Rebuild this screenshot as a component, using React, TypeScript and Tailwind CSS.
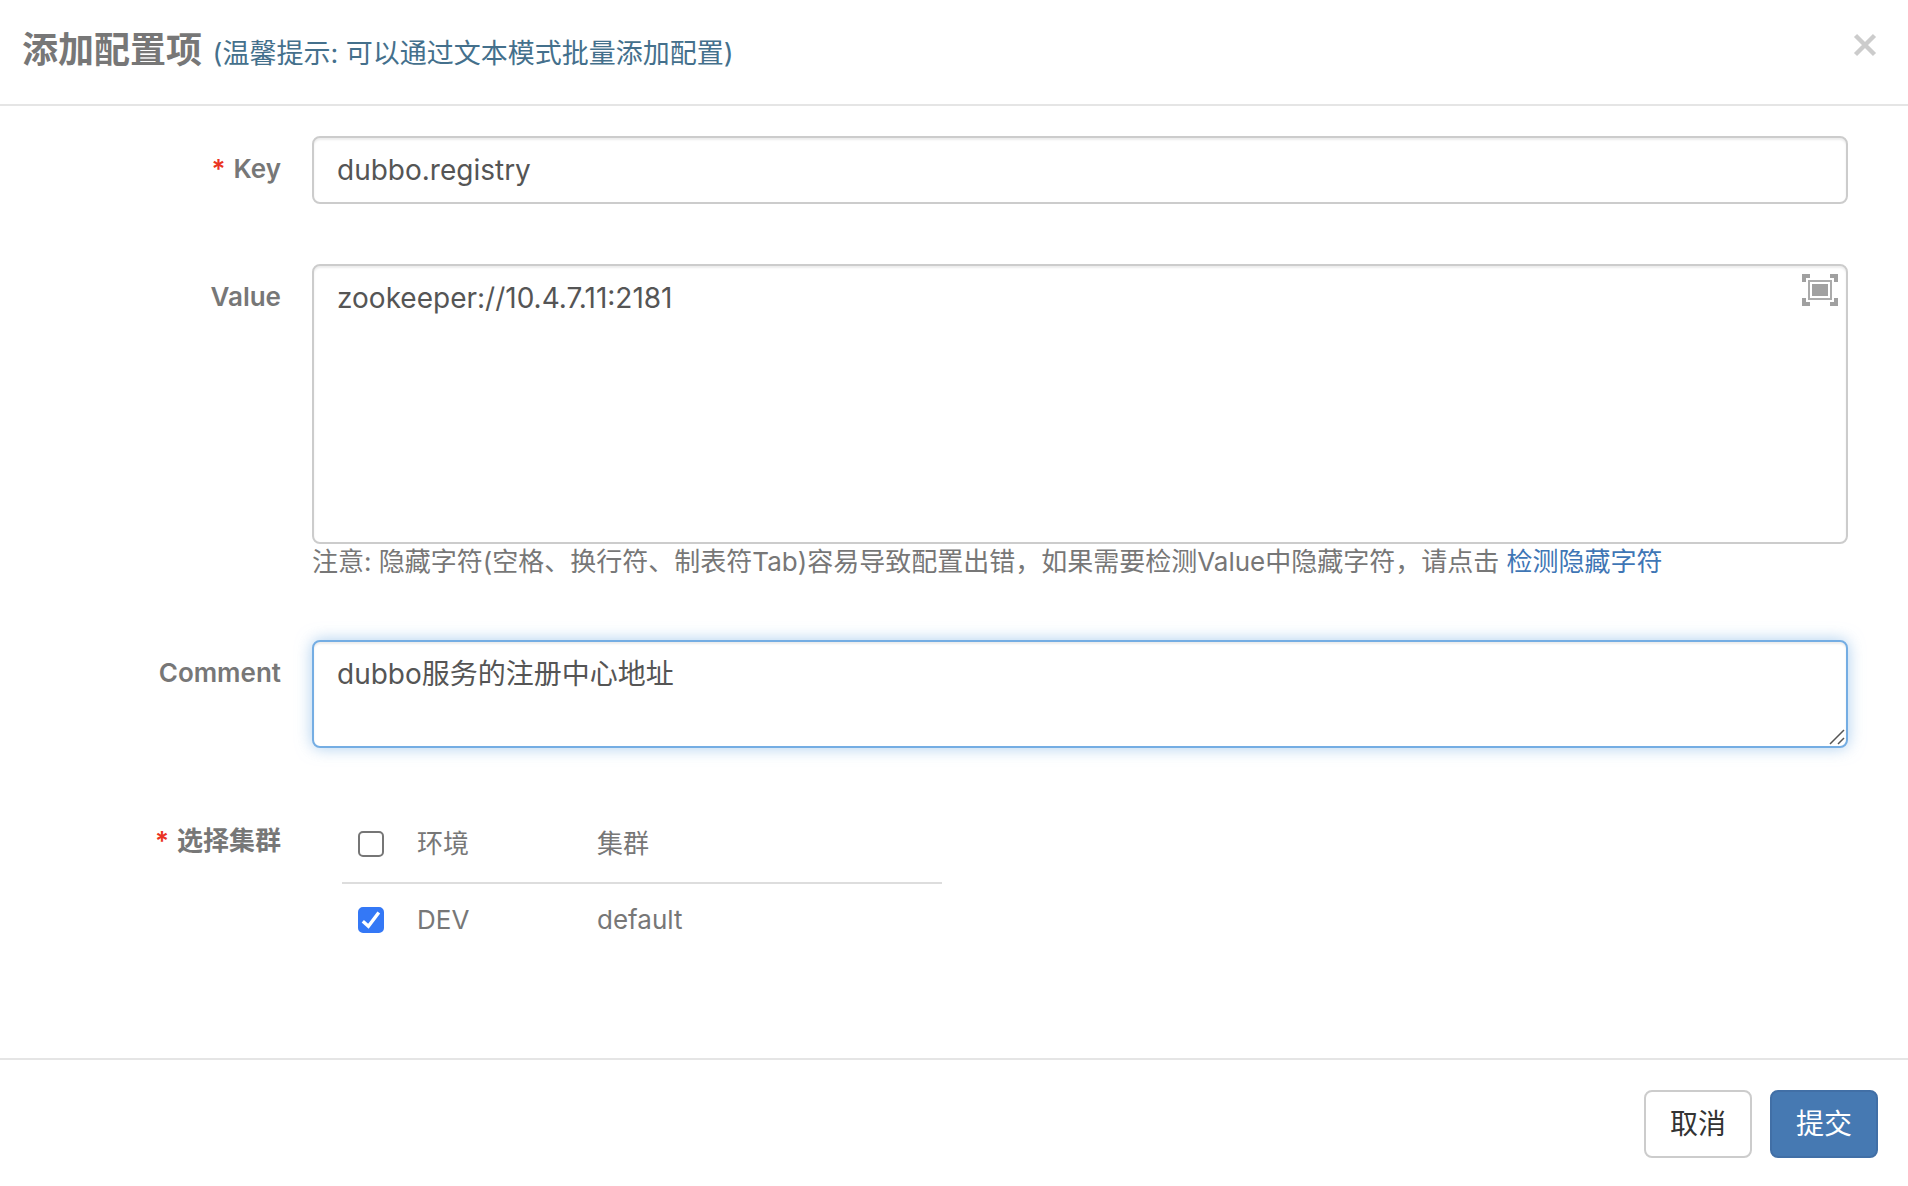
import { useState, type ReactNode } from "react";

const field =
  "block w-full rounded-lg border-2 bg-white px-[23px] py-3 text-[28px] leading-10 text-[#555] outline-none";
const plain = "border-[#ccc] shadow-[inset_0_2px_2px_rgba(0,0,0,0.075)]";
const active =
  "border-[#74ade3] shadow-[inset_0_2px_2px_rgba(0,0,0,0.075),0_0_16px_rgba(116,173,227,0.6)]";

function Row({ label, htmlFor, required, children }: {
  label: string;
  htmlFor: string;
  required?: boolean;
  children: ReactNode;
}) {
  return (
    <div className="flex gap-[31px]">
      <label
        htmlFor={htmlFor}
        className="w-[281px] shrink-0 pt-[15px] text-right text-[26px] leading-9 font-semibold text-[#777]"
      >
        {required && <span className="mr-2 text-[#ea3323]">*</span>}
        {label}
      </label>
      <div className="min-w-0 flex-1">{children}</div>
    </div>
  );
}

function Check({ id, label, checked, onChange }: {
  id: string;
  label: string;
  checked: boolean;
  onChange: (v: boolean) => void;
}) {
  return (
    <span className="relative block size-[26px]">
      <input
        id={id}
        type="checkbox"
        aria-label={label}
        checked={checked}
        onChange={(e) => onChange(e.target.checked)}
        className="block size-[26px] appearance-none rounded-[5px] border-2 border-[#767676] bg-white checked:border-[#3478f6] checked:bg-[#3478f6]"
      />
      {checked && (
        <svg viewBox="0 0 26 26" className="pointer-events-none absolute inset-0 size-[26px]" fill="none" stroke="#fff" strokeWidth="3.4">
          <path d="M4.8 14.3 10.4 19.2 20.8 5.4" />
        </svg>
      )}
    </span>
  );
}

export default function App() {
  const [all, setAll] = useState(false);
  const [dev, setDev] = useState(true);

  return (
    <div
      role="dialog"
      aria-labelledby="title"
      className="flex min-h-screen flex-col bg-white font-['Inter','Noto_Sans_CJK_SC',sans-serif] text-[26px] leading-9 text-[#777]"
    >
      <header className="flex items-start justify-between border-b-2 border-[#e5e5e5] pt-[30px] pr-[30px] pb-[30px] pl-[22px]">
        <h4 id="title" className="text-[36px] leading-10 font-bold">
          添加配置项{" "}
          <small className="ml-0.5 text-[27px] font-normal text-[#44708c]">(温馨提示: 可以通过文本模式批量添加配置)</small>
        </h4>
        <button type="button" aria-label="关闭" className="mt-0.5 size-[26px] text-[#ccc]">
          <svg viewBox="0 0 26 26" className="size-[26px]" fill="none" stroke="currentColor" strokeWidth="4.4">
            <path d="M3.5 3.5 22.5 22.5M22.5 3.5 3.5 22.5" />
          </svg>
        </button>
      </header>

      <form id="item-form" className="flex flex-1 flex-col gap-[60px] pt-[30px] pr-[60px] pb-[30px]">
        <Row label="Key" htmlFor="key" required>
          <input id="key" type="text" defaultValue="dubbo.registry" className={`${field} ${plain}`} />
        </Row>

        <Row label="Value" htmlFor="value">
          <div className="relative">
            <textarea
              id="value"
              rows={6}
              defaultValue="zookeeper://10.4.7.11:2181"
              className={`${field} ${plain} h-[280px] resize-none`}
            />
            <button type="button" aria-label="全屏" className="absolute top-2.5 right-2.5 h-8 w-9">
              <svg viewBox="0 0 36 32" className="h-8 w-9" fill="#a0a0a0">
                <path d="M0 0h8v4H4v4H0zM28 0h8v8h-4V4h-4zM0 24h4v4h4v4H0zM32 24h4v8h-8v-4h4z" />
                <path d="M6 6h24v20H6zM8 8v16h20V8z" fillRule="evenodd" fill="#ababab" />
                <path d="M10 10h16v12H10z" />
              </svg>
            </button>
          </div>
          <p>
            注意: 隐藏字符(空格、换行符、制表符Tab)容易导致配置出错，如果需要检测Value中隐藏字符，请点击{" "}
            <a href="#check" className="text-[#3f76b5]">检测隐藏字符</a>
          </p>
        </Row>

        <Row label="Comment" htmlFor="comment">
          <div className="relative">
            <textarea
              id="comment"
              rows={2}
              defaultValue="dubbo服务的注册中心地址"
              className={`${field} ${active} h-[108px] resize-none`}
            />
            <svg viewBox="0 0 16 16" className="pointer-events-none absolute right-[3px] bottom-[3px] size-4" fill="none" stroke="#555" strokeWidth="1.5">
              <path d="M1 15 15 1M9 15 15 9" />
            </svg>
          </div>
        </Row>

        <Row label="选择集群" htmlFor="cluster-all" required>
          <div className="pl-[30px]">
            <table className="w-[600px] table-fixed text-left">
              <thead>
                <tr className="border-b-2 border-[#ddd]">
                  <th className="w-[60px] pt-[18px] pb-5 pl-4">
                    <Check id="cluster-all" label="全选" checked={all} onChange={(v) => { setAll(v); setDev(v); }} />
                  </th>
                  <th className="w-[180px] pt-[18px] pb-5 pl-[15px] font-normal">环境</th>
                  <th className="pt-[18px] pb-5 pl-[15px] font-normal">集群</th>
                </tr>
              </thead>
              <tbody>
                <tr>
                  <td className="pt-[18px] pb-5 pl-4">
                    <Check id="cluster-dev" label="DEV default" checked={dev} onChange={setDev} />
                  </td>
                  <td className="pt-[18px] pb-5 pl-[15px]">DEV</td>
                  <td className="pt-[18px] pb-5 pl-[15px]">default</td>
                </tr>
              </tbody>
            </table>
          </div>
        </Row>
      </form>

      <footer className="flex justify-end gap-[18px] border-t-2 border-[#e5e5e5] px-[30px] pt-[30px] pb-7">
        <button type="button" className="rounded-lg border-2 border-[#ccc] bg-white px-6 py-3 text-[28px] leading-10 text-[#333]">
          取消
        </button>
        <button type="submit" form="item-form" className="rounded-lg border-2 border-[#416fa6] bg-[#4679b2] px-6 py-3 text-[28px] leading-10 text-white">
          提交
        </button>
      </footer>
    </div>
  );
}
